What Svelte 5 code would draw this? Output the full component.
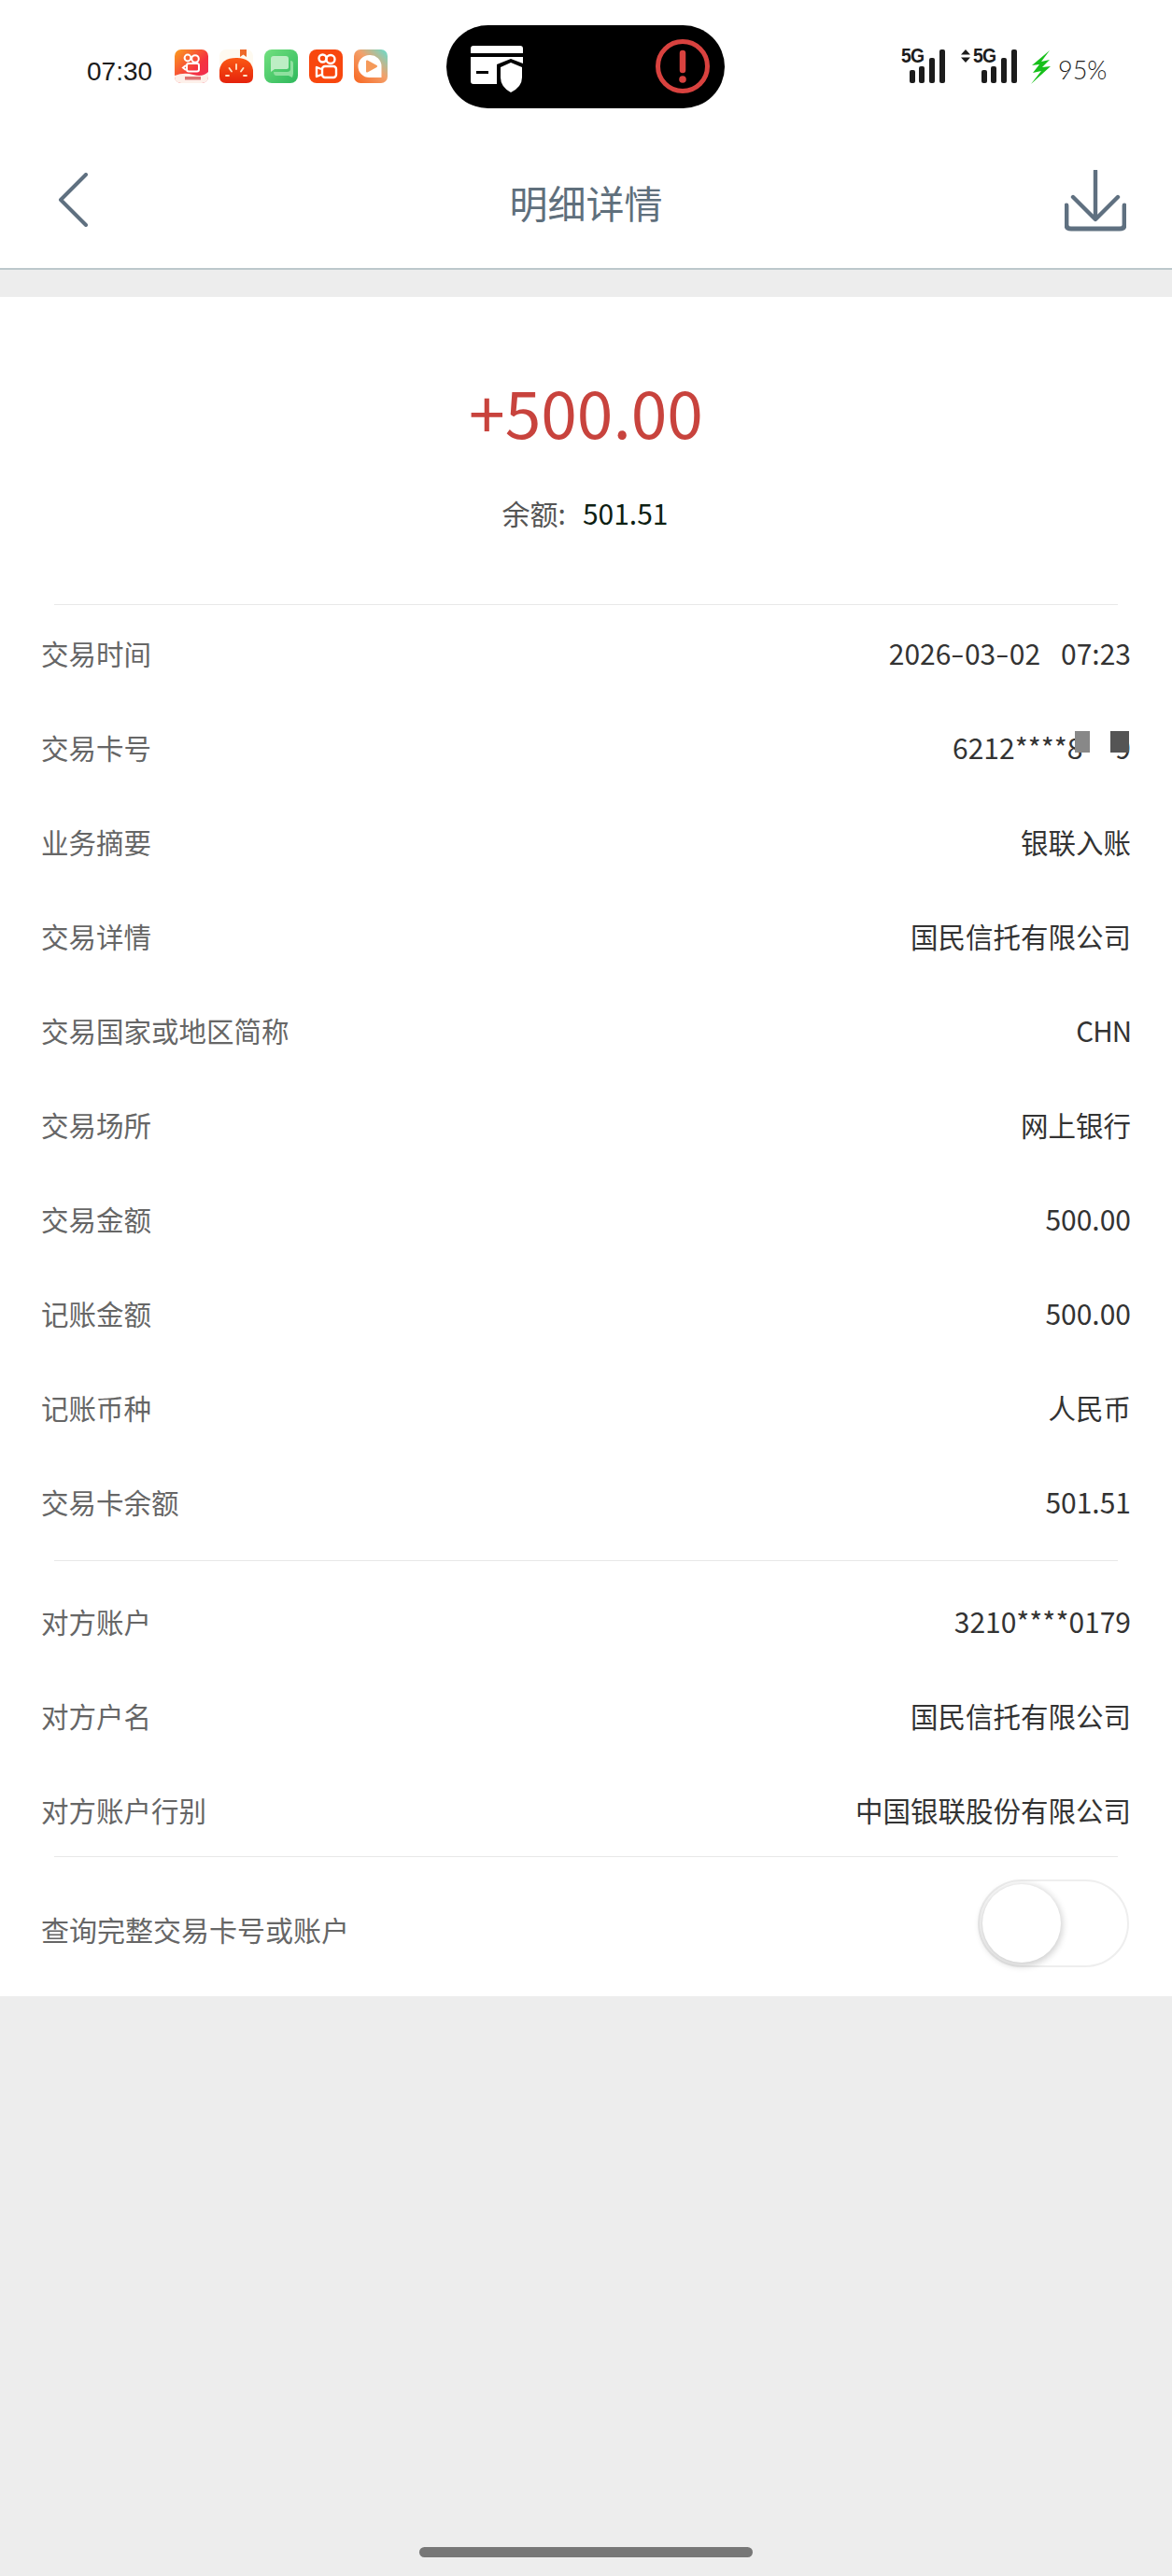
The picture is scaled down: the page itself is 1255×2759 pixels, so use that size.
<script>
  const top = [
    ['交易时间', 'date'],
    ['交易卡号', 'card'],
    ['业务摘要', '银联入账'],
    ['交易详情', '国民信托有限公司'],
    ['交易国家或地区简称', 'CHN'],
    ['交易场所', '网上银行'],
    ['交易金额', '500.00'],
    ['记账金额', '500.00'],
    ['记账币种', '人民币'],
    ['交易卡余额', '501.51']
  ];
  const other = [
    ['对方账户', '3210****0179'],
    ['对方户名', '国民信托有限公司'],
    ['对方账户行别', '中国银联股份有限公司']
  ];
  const isCjk = (s) => /[\u4e00-\u9fa5]/.test(s);
</script>

<div class="page">
  <header class="status">
    <div class="left">
      <span class="time">07:30</span>
      <div class="apps">
        <svg viewBox="0 0 36 36" class="app">
          <defs>
            <linearGradient id="a1" x1="0" y1="0" x2="1" y2="1"><stop offset="0" stop-color="#fb9e1e"/><stop offset=".6" stop-color="#f5323f"/><stop offset="1" stop-color="#ee2b5b"/></linearGradient>
            <linearGradient id="a3" x1="0" y1="0" x2="1" y2="1"><stop offset="0" stop-color="#72e07f"/><stop offset="1" stop-color="#2eb85c"/></linearGradient>
            <linearGradient id="a5" x1="0" y1="1" x2="1" y2="0"><stop offset="0" stop-color="#f8641e"/><stop offset=".55" stop-color="#f3a06a"/><stop offset="1" stop-color="#62dfd0"/></linearGradient>
            <linearGradient id="a2" x1="0" y1="0" x2="0" y2="1"><stop offset="0" stop-color="#fb5a14"/><stop offset="1" stop-color="#e5220c"/></linearGradient>
          </defs>
          <rect width="36" height="36" rx="7" fill="url(#a1)"/>
          <path d="M0 28Q10 24 20 27T36 24V29Q36 36 29 36H7Q0 36 0 29Z" fill="#fdf0ea"/>
          <circle cx="14" cy="9" r="3.400" fill="none" stroke="#fff" stroke-width="2"/>
          <circle cx="22" cy="10" r="3.800" fill="none" stroke="#fff" stroke-width="2"/>
          <rect x="13" y="15" width="13" height="8.500" rx="2" fill="none" stroke="#fff" stroke-width="2"/>
          <path d="M12 17L9 19.500 12 22" fill="none" stroke="#fff" stroke-width="2"/>
          <rect x="11" y="29" width="17" height="3.500" fill="#d24a4a" opacity=".75"/>
        </svg>
        <svg viewBox="0 0 36 36" class="app">
          <rect width="36" height="36" rx="7" fill="#fefaf0"/>
          <path d="M22 0h7v8l-3.500-2.500L22 8Z" fill="#ed6a2a"/>
          <path d="M0 22Q2 9 18 9T36 22V29Q36 36 29 36H7Q0 36 0 29Z" fill="url(#a2)"/>
          <path d="M18 16v5M10.500 20l2.500 3.500M25.500 20L23 23.500M7 28h3M26 28h3" stroke="#fde6c8" stroke-width="1.800" stroke-linecap="round"/>
        </svg>
        <svg viewBox="0 0 36 36" class="app">
          <rect width="36" height="36" rx="8" fill="url(#a3)"/>
          <path d="M7 22V10q0-3 3-3h13q3 0 3 3v9q0 2-3 2H11l-4 3Z" fill="#bdeec4"/>
          <path d="M10 24h14q4 0 4-3v-9q3 0 3 3v11l-1 4-4-2H13q-3 0-3-4Z" fill="#8fe09f"/>
        </svg>
        <svg viewBox="0 0 36 36" class="app">
          <rect width="36" height="36" rx="8" fill="#f8470e"/>
          <circle cx="14.500" cy="9.500" r="4" fill="none" stroke="#fff" stroke-width="2.400"/>
          <circle cx="23" cy="10.500" r="4.500" fill="none" stroke="#fff" stroke-width="2.400"/>
          <rect x="14" y="18" width="15" height="12" rx="3" fill="none" stroke="#fff" stroke-width="2.400"/>
          <path d="M13 21L8 19V29L13 27" fill="none" stroke="#fff" stroke-width="2.400" stroke-linejoin="round"/>
        </svg>
        <svg viewBox="0 0 36 36" class="app">
          <rect width="36" height="36" rx="7" fill="url(#a5)"/>
          <path d="M18 6A12 12 0 1 0 18 30H31V18A12 12 0 0 0 18 6Z" fill="#fff" transform="translate(-1.500 0)"/>
          <path d="M14 12.500L24 18 14 23.500Z" fill="#f59a5a" stroke="#f59a5a" stroke-width="2" stroke-linejoin="round"/>
        </svg>
      </div>
    </div>

    <div class="pill">
      <svg class="card" viewBox="0 0 56 50">
        <path d="M3 0H53Q56 0 56 3V8H0V3Q0 0 3 0ZM0 12H56V19L43 14 28 20V41H3Q0 41 0 38ZM6 27v3h13v-3Z" fill="#fff" fill-rule="evenodd"/>
        <path d="M43 18L55 23V34Q55 44 43 50 32 44 32 34V23Z" fill="#fff"/>
      </svg>
      <svg class="alert" viewBox="0 0 58 58">
        <circle cx="29" cy="29" r="26.500" fill="none" stroke="#d9423f" stroke-width="5"/>
        <path d="M29 15V33" stroke="#d9423f" stroke-width="6.500" stroke-linecap="round"/>
        <circle cx="29" cy="43" r="3.800" fill="#d9423f"/>
      </svg>
    </div>

    <div class="right">
      <div class="sig first">
        <b class="five">5G</b>
        <i class="bar b1"></i><i class="bar b2"></i><i class="bar b3"></i><i class="bar b4"></i>
      </div>
      <svg class="updown" viewBox="0 0 10 14"><path d="M5 0L10 5.500H0ZM5 14L0 8.500H10Z" fill="#1c1c1c"/></svg>
      <div class="sig second">
        <b class="five">5G</b>
        <i class="bar b1"></i><i class="bar b2"></i><i class="bar b3"></i><i class="bar b4"></i>
      </div>
      <svg class="bolt" viewBox="0 0 21 36"><path d="M20 0L1 16 9 15 2 24 11 22 0 36 21 17 12 18 20 10 11 12Z" fill="#17c01b"/></svg>
      <span class="pct">95%</span>
    </div>
  </header>

  <nav class="nav">
    <svg class="back" viewBox="0 0 32 58"><path d="M30 2L3 29 30 56" fill="none" stroke="#5f7080" stroke-width="4" stroke-linecap="round" stroke-linejoin="round"/></svg>
    <h1>明细详情</h1>
    <svg class="dl" viewBox="0 0 66 66">
      <path d="M33 1V52M9 29L33 53 57 29" fill="none" stroke="#5f7080" stroke-width="4.400" stroke-linecap="round" stroke-linejoin="round"/>
      <path d="M2 38V59Q2 63 7 63H59Q64 63 64 59V38" fill="none" stroke="#5f7080" stroke-width="4.800" stroke-linecap="round"/>
    </svg>
  </nav>

  <main class="sheet">
    <section class="hero">
      <div class="amount">+500.00</div>
      <div class="balance"><span class="bl">余额:</span><span class="bv">501.51</span></div>
    </section>
    <hr />
    <section class="rows one">
      {#each top as [k, v]}
        <div class="row">
          <span class="k">{k}</span>
          {#if v === 'date'}
            <span class="v">2026<span class="dash">-</span>03<span class="dash">-</span>02<span class="sp"></span>07:23</span>
          {:else if v === 'card'}
            <span class="v masked">6212****8<span class="gap"></span>9<i class="m1"></i><i class="m2"></i></span>
          {:else if v === 'CHN'}
            <span class="v code">{v}</span>
          {:else}
            <span class="v" class:cjk={isCjk(v)}>{v}</span>
          {/if}
        </div>
      {/each}
    </section>
    <hr />
    <section class="rows two">
      {#each other as [k, v]}
        <div class="row">
          <span class="k">{k}</span>
          <span class="v" class:cjk={isCjk(v)}>{v}</span>
        </div>
      {/each}
    </section>
    <hr />
    <section class="query">
      <span class="k long">查询完整交易卡号或账户</span>
      <div class="switch"><div class="knob"></div></div>
    </section>
  </main>

  <div class="home"><div class="homebar"></div></div>
</div>

<style>
  :global(body) { margin: 0; background: #ededed; }
  .page {
    width: 1255px;
    height: 2759px;
    background: #ededed;
    font-family: "Noto Sans CJK SC", "Noto Sans", sans-serif;
    display: flex;
    flex-direction: column;
    overflow: hidden;
  }
  .status {
    height: 146px;
    background: #fff;
    display: grid;
    grid-template-columns: 478px 298px 1fr;
    align-items: start;
  }
  .left {
    display: flex;
    align-items: flex-start;
    padding: 53px 0 0 93px;
  }
  .time {
    font-family: "Liberation Sans", sans-serif;
    font-size: 28px;
    line-height: 36px;
    width: 94px;
    color: #1b1b1b;
    padding-top: 6px;
  }
  .apps { display: flex; gap: 12px; }
  .app { width: 36px; height: 36px; display: block; }
  .pill {
    margin-top: 27px;
    height: 89px;
    border-radius: 45px;
    background: #000;
    display: flex;
    align-items: center;
    justify-content: space-between;
    padding: 0 16px 0 26px;
  }
  .card { width: 56px; height: 50px; margin-top: 5px; }
  .alert { width: 58px; height: 58px; margin-top: -1px; }
  .right {
    display: flex;
    align-items: flex-start;
    padding: 53px 0 0 189px;
  }
  .sig {
    position: relative;
    width: 46px;
    height: 36px;
    flex: none;
  }
  .first { margin-right: 18px; }
  .second { margin-left: 3px; margin-right: 16px; }
  .five {
    position: absolute;
    left: 0;
    top: -4px;
    font-family: "Liberation Sans", sans-serif;
    font-weight: 700;
    font-size: 22px;
    line-height: 22px;
    letter-spacing: -1px;
    color: #1c1c1c;
    transform: scaleX(.88);
    transform-origin: left;
  }
  .bar {
    position: absolute;
    bottom: 0;
    width: 6px;
    border-radius: 2px;
    background: #1c1c1c;
  }
  .b1 { left: 9px; height: 14px; }
  .b2 { left: 19px; height: 18px; }
  .b3 { left: 30px; height: 27px; }
  .b4 { left: 41px; height: 36px; }
  .updown { width: 10px; height: 14px; flex: none; }
  .bolt { width: 21px; height: 36px; flex: none; margin-top: 1px; }
  .pct {
    font-family: "Lato", sans-serif;
    font-weight: 300;
    font-size: 27px;
    line-height: 36px;
    margin-left: 8px;
    margin-top: 4px;
    color: #1e1e1e;
  }
  .nav {
    height: 141px;
    background: #fff;
    border-bottom: 2px solid #bcc8cc;
    display: grid;
    grid-template-columns: 1fr auto 1fr;
    align-items: center;
    padding: 0 49px;
  }
  .back { width: 32px; height: 58px; margin: -6px 0 0 13px; }
  .dl { width: 66px; height: 66px; justify-self: end; margin-top: -3px; }
  h1 {
    margin: 0 0 2px;
    font-size: 41px;
    font-weight: 400;
    line-height: 56px;
    color: #5f6f7c;
  }
  .sheet {
    margin-top: 29px;
    background: #fff;
    height: 1820px;
  }
  .hero {
    height: 329px;
    display: flex;
    flex-direction: column;
    align-items: center;
  }
  .amount {
    margin-top: 72px;
    font-size: 69.500px;
    line-height: 100px;
    color: #c8433d;
  }
  .balance {
    margin-top: 34px;
    font-size: 30px;
    line-height: 50px;
    display: flex;
    gap: 18px;
    margin-left: -2px;
  }
  .bl { color: #555; }
  .bv { color: #0c2012; }
  hr {
    margin: 0 58px;
    border: 0;
    height: 1px;
    background: #e8e8e8;
  }
  .rows {
    display: flex;
    flex-direction: column;
    gap: 41px;
    padding: 0 44px;
  }
  .one { padding-top: 21px; padding-bottom: 33px; }
  .two { padding-top: 34px; padding-bottom: 20px; }
  .row {
    height: 60px;
    display: flex;
    align-items: center;
    justify-content: space-between;
    font-size: 30px;
    line-height: 60px;
  }
  .k { color: #666; font-size: 29.500px; }
  .k.long { font-size: 30px; }
  .v { color: #333; white-space: nowrap; }
  .cjk { font-size: 29.500px; }
  .code { font-size: 29.500px; letter-spacing: -1px; }
  .dash {
    display: inline-block;
    width: 14.500px;
    text-align: center;
    transform: scaleX(1.400) translateY(-1px);
  }
  .sp { display: inline-block; width: 22px; }
  .masked { position: relative; }
  .gap { display: inline-block; width: 35px; }
  .m1, .m2 { position: absolute; top: 13px; height: 23px; }
  .m1 { right: 44px; width: 16px; background: #888; }
  .m2 { right: 2px; width: 20px; background: #555; }
  .query {
    padding: 24px 46px 31px 44px;
    display: flex;
    align-items: center;
    justify-content: space-between;
  }
  .query .k { margin-top: 12px; }
  .switch {
    width: 162px;
    height: 94px;
    box-sizing: border-box;
    border: 2px solid #eee;
    border-radius: 47px;
    background: #fff;
    position: relative;
  }
  .knob {
    position: absolute;
    left: 3px;
    top: 3px;
    width: 84px;
    height: 84px;
    border-radius: 50%;
    background: #fff;
    box-shadow: 0 2px 7px 2px rgba(0,0,0,.18);
  }
  .home {
    flex: 1;
    display: flex;
    justify-content: center;
    align-items: flex-end;
    padding-bottom: 20px;
  }
  .homebar {
    width: 357px;
    height: 11px;
    border-radius: 6px;
    background: #777;
  }
</style>
